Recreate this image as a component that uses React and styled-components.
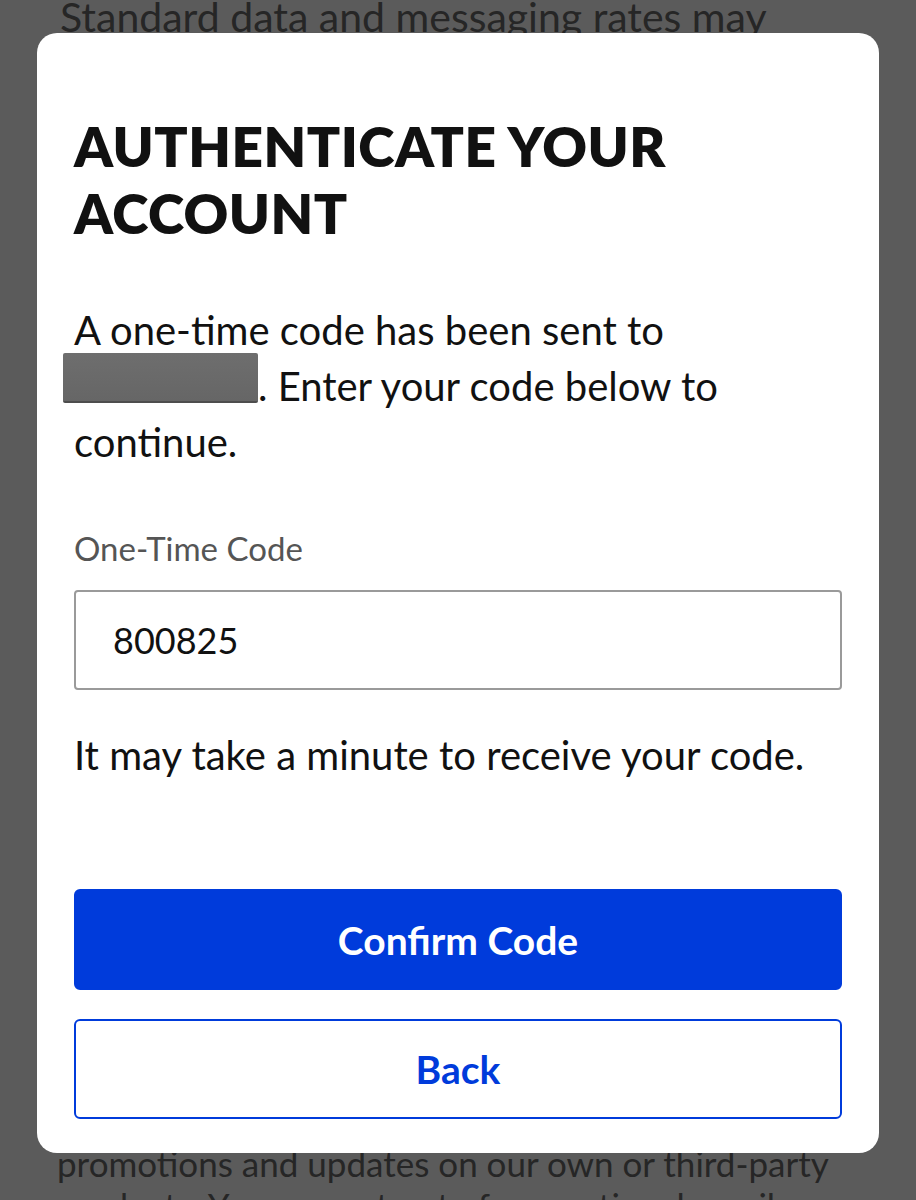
import React from 'react';
import styled, { createGlobalStyle } from 'styled-components';

const GlobalStyle = createGlobalStyle`
  html, body {
    margin: 0;
    padding: 0;
    background: #5b5b5b;
  }
  body {
    font-family: Lato, "Open Sans", sans-serif;
  }
`;

const Page = styled.div`
  position: relative;
  height: 1200px;
  overflow: hidden;
  background: #5b5b5b;
  display: flex;
  flex-direction: column;
  justify-content: space-between;
`;

const BackText = styled.p`
  margin: 0;
  padding: 0 57px;
  font-size: ${p => p.$size}px;
  line-height: 42px;
  color: #262626;
  white-space: nowrap;
`;

const Modal = styled.div`
  position: absolute;
  top: 33px;
  left: 37px;
  width: 842px;
  height: 1120px;
  box-sizing: border-box;
  background: #fff;
  border-radius: 20px;
  padding: 80px 37px 0 37px;
  display: flex;
  flex-direction: column;
`;

const Title = styled.h1`
  margin: 0;
  font-size: 55px;
  line-height: 67px;
  font-weight: 800;
  color: #111;
  letter-spacing: 0.5px;
`;

const Body = styled.p`
  margin: 55px 0 0;
  font-size: 40px;
  line-height: 56px;
  color: #111;
`;

const Redacted = styled.span`
  display: inline-block;
  position: relative;
  top: -5px;
  width: 195px;
  height: 50px;
  margin-left: -11px;
  vertical-align: top;
  box-sizing: border-box;
  background: linear-gradient(#6e6e6e, #666);
  border-bottom: 2px solid #4d4d4d;
  border-radius: 2px;
`;

const Label = styled.label`
  margin-top: 61px;
  font-size: 33px;
  line-height: 34px;
  color: #555;
`;

const Input = styled.div`
  margin-top: 25px;
  height: 100px;
  box-sizing: border-box;
  border: 2px solid #9a9a9a;
  border-radius: 4px;
  padding: 0 37px;
  display: flex;
  align-items: center;
  font-size: 36px;
  color: #111;
`;

const Hint = styled.p`
  margin: 43px 0 0;
  font-size: 40px;
  line-height: 44px;
  color: #111;
`;

const Button = styled.button`
  height: ${p => p.$h}px;
  margin-top: ${p => p.$mt}px;
  box-sizing: border-box;
  border-radius: 6px;
  font-family: inherit;
  font-size: 39px;
  font-weight: 700;
  border: 2px solid #003bdb;
  background: ${p => (p.$primary ? '#003bdb' : '#fff')};
  color: ${p => (p.$primary ? '#fff' : '#003bdb')};
`;

export default function App() {
  return (
    <>
      <GlobalStyle />
      <Page>
        <BackText $size={41} style={{ marginTop: -4, paddingLeft: 60 }}>
          Standard data and messaging rates may
        </BackText>
        <BackText $size={35} style={{ marginBottom: -26 }}>
          promotions and updates on our own or third-party
          <br />
          products. You can opt out of promotional emails
        </BackText>
        <Modal>
          <Title>
            AUTHENTICATE YOUR
            <br />
            ACCOUNT
          </Title>
          <Body>
            A one-time code has been sent to
            <br />
            <Redacted />. Enter your code below to continue.
          </Body>
          <Label>One-Time Code</Label>
          <Input>800825</Input>
          <Hint>It may take a minute to receive your code.</Hint>
          <Button $primary $h={101} $mt={112}>Confirm Code</Button>
          <Button $h={100} $mt={29}>Back</Button>
        </Modal>
      </Page>
    </>
  );
}
